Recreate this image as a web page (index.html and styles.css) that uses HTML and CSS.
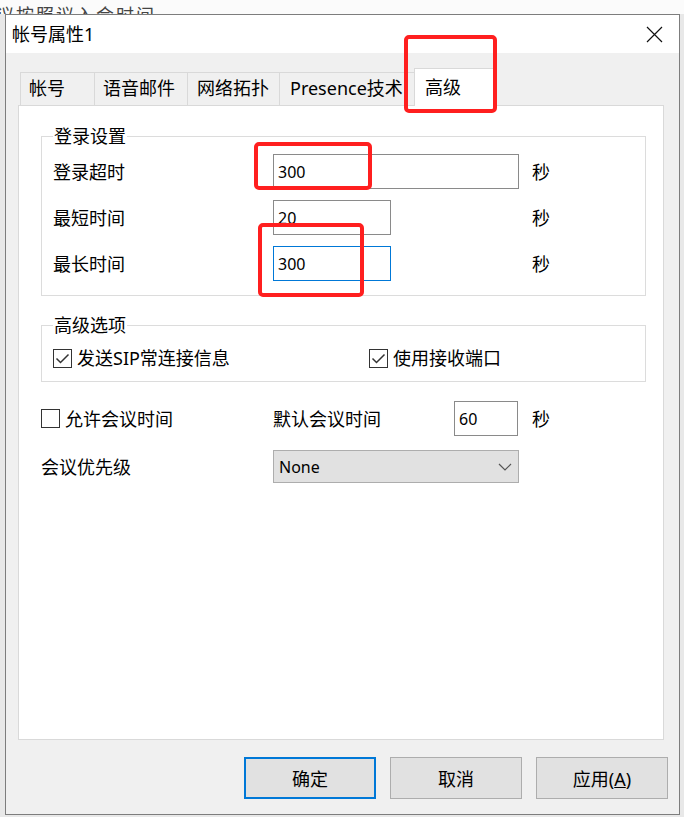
FILE: index.html
```html
<!DOCTYPE html>
<html lang="zh-CN">
<head>
<meta charset="utf-8">
<title>帐号属性1</title>
<link rel="stylesheet" href="styles.css">
</head>
<body>
<div class="behind">议按照议入会时间</div>
<div class="dialog">
  <div class="titlebar">
    <span class="title">帐号属性1</span>
    <svg class="close" width="17" height="17" viewBox="0 0 17 17"><path d="M1 1L16 16M16 1L1 16" stroke="#111" stroke-width="1.2" fill="none"/></svg>
  </div>
  <div class="body">
    <div class="tabs">
      <div class="tab t1">帐号</div>
      <div class="tab t2">语音邮件</div>
      <div class="tab t3">网络拓扑</div>
      <div class="tab t4">Presence技术</div>
      <div class="tab active">高级</div>
    </div>
    <div class="panel">
      <fieldset class="group g1">
        <legend>登录设置</legend>
        <div class="form-grid">
          <span class="lbl">登录超时</span>
          <input class="field wide" type="text" value="300" readonly>
          <span class="unit">秒</span>
          <span class="lbl">最短时间</span>
          <input class="field narrow" type="text" value="20" readonly>
          <span class="unit">秒</span>
          <span class="lbl">最长时间</span>
          <input class="field narrow focus" type="text" value="300" readonly>
          <span class="unit">秒</span>
        </div>
      </fieldset>
      <fieldset class="group g2">
        <legend>高级选项</legend>
        <div class="check-grid">
          <span class="check"><svg class="cb" viewBox="0 0 19 19"><rect x="0.5" y="0.5" width="18" height="18" fill="#fff" stroke="#333"/><path d="M3.5 9.5l4 4 8-8" stroke="#333" stroke-width="1.5" fill="none"/></svg>发送SIP常连接信息</span>
          <span class="check"><svg class="cb" viewBox="0 0 19 19"><rect x="0.5" y="0.5" width="18" height="18" fill="#fff" stroke="#333"/><path d="M3.5 9.5l4 4 8-8" stroke="#333" stroke-width="1.5" fill="none"/></svg>使用接收端口</span>
        </div>
      </fieldset>
      <div class="meeting-grid">
        <span class="check"><svg class="cb" viewBox="0 0 19 19"><rect x="0.5" y="0.5" width="18" height="18" fill="#fff" stroke="#333"/></svg>允许会议时间</span>
        <span class="lbl">默认会议时间</span>
        <input class="field short" type="text" value="60" readonly>
        <span class="unit">秒</span>
        <span class="lbl">会议优先级</span>
        <div class="select"><span>None</span><svg width="14" height="8" viewBox="0 0 14 8"><path d="M1 1l6 6 6-6" stroke="#555" stroke-width="1.2" fill="none"/></svg></div>
      </div>
    </div>
    <div class="buttons">
      <button class="btn default">确定</button>
      <button class="btn">取消</button>
      <button class="btn">应用(<u>A</u>)</button>
    </div>
  </div>
  <div class="mark mark-tab"></div>
  <div class="mark mark-login"></div>
  <div class="mark mark-max"></div>
</div>
</body>
</html>
```
FILE: styles.css
```css
* { box-sizing: border-box; }
html, body { margin: 0; padding: 0; }
body {
  width: 684px;
  height: 817px;
  overflow: hidden;
  background: #e8e8e8;
  font-family: "Noto Sans", "Noto Sans CJK SC", sans-serif;
  font-size: 18px;
  color: #000;
}
.behind {
  height: 14px;
  overflow: hidden;
  background: #fbfbfb;
  padding-top: 4px;
  margin-left: -4px;
  color: #444;
  line-height: 22px;
  white-space: nowrap;
  letter-spacing: 2px;
}
.dialog {
  position: relative;
  margin-left: 5px;
  width: 675px;
  height: 801px;
  border: 1px solid #7d7d7d;
  background: #f0f0f0;
  display: flex;
  flex-direction: column;
}
.titlebar {
  height: 38px;
  flex: none;
  background: #fff;
  display: flex;
  align-items: center;
  justify-content: space-between;
  padding: 0 16px 0 6px;
}
.title { line-height: 24px; }
.close { display: block; }
.body {
  flex: 1;
  padding: 15px 11px 0 12px;
  display: flex;
  flex-direction: column;
}
.tabs {
  display: flex;
  align-items: flex-end;
  height: 37px;
  padding-left: 2px;
}
.tab {
  height: 33px;
  border: 1px solid #d9d9d9;
  border-bottom: none;
  margin-right: -1px;
  padding-left: 8px;
  line-height: 31px;
  white-space: nowrap;
  overflow: hidden;
  background: #f0f0f0;
}
.t1 { width: 75px; }
.t2 { width: 94px; }
.t3 { width: 93px; padding-left: 9px; }
.t4 { width: 136px; padding-left: 10px; }
.tab.active {
  width: 80px;
  height: 38px;
  margin-bottom: -1px;
  padding-left: 10px;
  line-height: 36px;
  background: #fff;
  position: relative;
  z-index: 1;
}
.panel {
  height: 635px;
  margin-right: 4px;
  border: 1px solid #d9d9d9;
  background: #fff;
  padding: 0 17px 0 22px;
}
.group {
  margin: 0;
  min-width: 0;
  border: 1px solid #dcdcdc;
}
.group legend {
  padding: 0 1px;
  line-height: 20px;
}
.g1 {
  margin-top: 20px;
  padding: 8px 11px 14px 11px;
}
.g2 {
  margin-top: 19px;
  padding: 11px 11px 15px 11px;
}
.form-grid {
  display: grid;
  grid-template-columns: 220px 259px auto;
  grid-auto-rows: 35px;
  row-gap: 11px;
  align-items: center;
}
.lbl, .unit { line-height: 24px; white-space: nowrap; }
.field {
  font-family: inherit;
  font-size: 16px;
  color: #000;
  height: 35px;
  border: 1px solid #8a8a8a;
  background: #fff;
  padding: 0 4px;
  margin: 0;
  outline: none;
}
.field.wide { width: 246px; }
.field.narrow { width: 118px; }
.field.short { width: 64px; }
.field.focus { border-color: #0078d7; }
.check-grid {
  display: grid;
  grid-template-columns: 316px auto;
  align-items: center;
  height: 20px;
}
.check {
  display: flex;
  align-items: center;
  gap: 5px;
  line-height: 24px;
  white-space: nowrap;
}
.cb { width: 19px; height: 19px; flex: none; display: block; }
.meeting-grid {
  margin-top: 19px;
  display: grid;
  grid-template-columns: 232px 181px 78px auto;
  grid-template-rows: 35px 33px;
  row-gap: 14px;
  align-items: center;
}
.select {
  grid-column: span 2;
  width: 246px;
  height: 33px;
  display: flex;
  align-items: center;
  justify-content: space-between;
  padding: 0 6px 0 5px;
  font-size: 16px;
  background: #e1e1e1;
  border: 1px solid #adadad;
}
.buttons {
  display: flex;
  justify-content: flex-end;
  gap: 14px;
  margin-top: 17px;
}
.btn {
  font: inherit;
  color: #000;
  width: 132px;
  height: 42px;
  margin: 0;
  padding: 0;
  background: #e1e1e1;
  border: 1px solid #adadad;
}
.btn.default { border: 2px solid #0078d7; }
.mark {
  position: absolute;
  border: 4px solid #ff1f1f;
  border-radius: 5px;
  z-index: 5;
}
.mark-tab { left: 398px; top: 20px; width: 93px; height: 78px; }
.mark-login { left: 248px; top: 127px; width: 118px; height: 48px; }
.mark-max { left: 252px; top: 208px; width: 106px; height: 74px; }
```
